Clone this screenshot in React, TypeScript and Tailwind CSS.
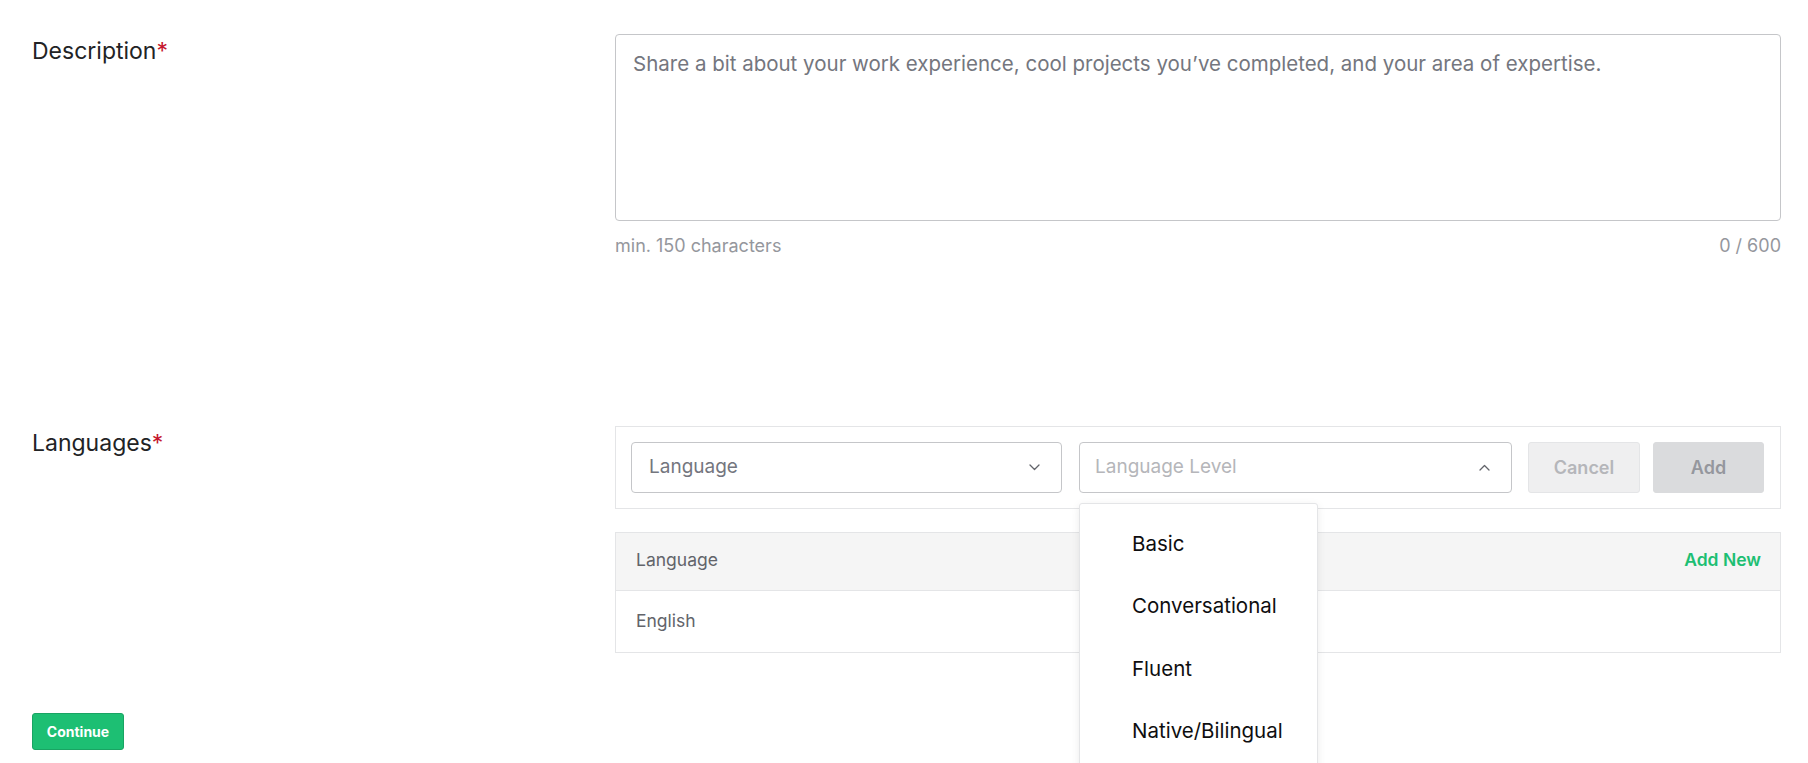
import React from "react";

function Chevron({ up = false }: { up?: boolean }) {
  return (
    <svg width="11" height="7" viewBox="0 0 11 7" fill="none" className={up ? "rotate-180" : ""}>
      <path d="M1 1l4.5 4.5L10 1" stroke="#62646a" strokeWidth="1.3" strokeLinecap="round" strokeLinejoin="round" />
    </svg>
  );
}

export default function App() {
  const levels = ["Basic", "Conversational", "Fluent", "Native/Bilingual"];
  return (
    <div className="min-h-screen bg-white pl-8 font-['Inter',sans-serif] text-[#222325]">
      {/* Description */}
      <div className="flex pt-[34px]">
        <div className="w-[583px] shrink-0 pt-[1px] text-[23px] leading-[33px]">
          Description<span className="text-[#c5162e]">*</span>
        </div>
        <div className="w-[1166px]">
          <textarea
            className="block h-[187px] w-full resize-none rounded-[4px] border border-[#c5c6c9] px-[17px] pt-[15px] text-[20.5px] leading-7 text-[#62646a] outline-none placeholder:text-[#74767e]"
            placeholder="Share a bit about your work experience, cool projects you’ve completed, and your area of expertise."
          />
          <div className="mt-[13px] flex justify-between text-[18px] leading-6 text-[#95979d]">
            <span>min. 150 characters</span>
            <span>0 / 600</span>
          </div>
        </div>
      </div>

      {/* Languages */}
      <div className="mt-[168px] flex">
        <div className="w-[583px] shrink-0 pt-[1px] text-[23px] leading-[33px]">
          Languages<span className="text-[#c5162e]">*</span>
        </div>
        <div className="w-[1166px]">
          <div className="flex border border-[#e4e5e7] p-[15px]">
            <div className="flex h-[51px] w-[431px] shrink-0 items-center justify-between rounded-[4px] border border-[#c5c6c9] pl-[17px] pr-[21px] text-[19px] text-[#74767e]">
              <span>Language</span>
              <Chevron />
            </div>
            <div className="relative ml-[17px] w-[433px] shrink-0">
              <div className="flex h-[51px] items-center justify-between rounded-[4px] border border-[#c5c6c9] pl-[15px] pr-[21px] text-[19px] text-[#b5b6ba]">
                <span>Language Level</span>
                <Chevron up />
              </div>
              <div className="absolute left-0 top-[61px] z-10 w-[239px] rounded-[3px] border border-[#e4e5e7] bg-white pb-[12px] pt-[9px] shadow-[0_2px_8px_rgba(0,0,0,0.08)]">
                {levels.map((l) => (
                  <div key={l} className="flex h-[62.5px] items-center pl-[52px] text-[20.5px] text-[#0e0e0f]">
                    {l}
                  </div>
                ))}
              </div>
            </div>
            <button className="ml-[16px] h-[51px] w-[112px] shrink-0 rounded-[3px] border border-[#e4e5e7] bg-[#efeff0] text-[18px] font-semibold text-[#b5b6ba]">
              Cancel
            </button>
            <button className="ml-[13px] h-[51px] w-[111px] shrink-0 rounded-[3px] border border-[#dadbdd] bg-[#dadbdd] text-[18px] font-semibold text-[#95979d]">
              Add
            </button>
          </div>

          <div className="mt-[23px] border border-[#e4e5e7]">
            <div className="flex h-[58px] items-center justify-between border-b border-[#e4e5e7] bg-[#f5f5f5] pb-[2px] pl-[20px] pr-[19px] text-[17.5px]">
              <span className="text-[#62646a]">Language</span>
              <span className="font-semibold text-[#1dbf73]">Add New</span>
            </div>
            <div className="flex h-[61px] items-center pb-[1px] pl-[20px] text-[17.5px] text-[#62646a]">English</div>
          </div>
        </div>
      </div>

      <button className="mt-[60px] h-[37px] w-[92px] rounded-[3px] border border-[#19a463] bg-[#1dbf73] text-[14px] font-bold text-white">
        Continue
      </button>
    </div>
  );
}
